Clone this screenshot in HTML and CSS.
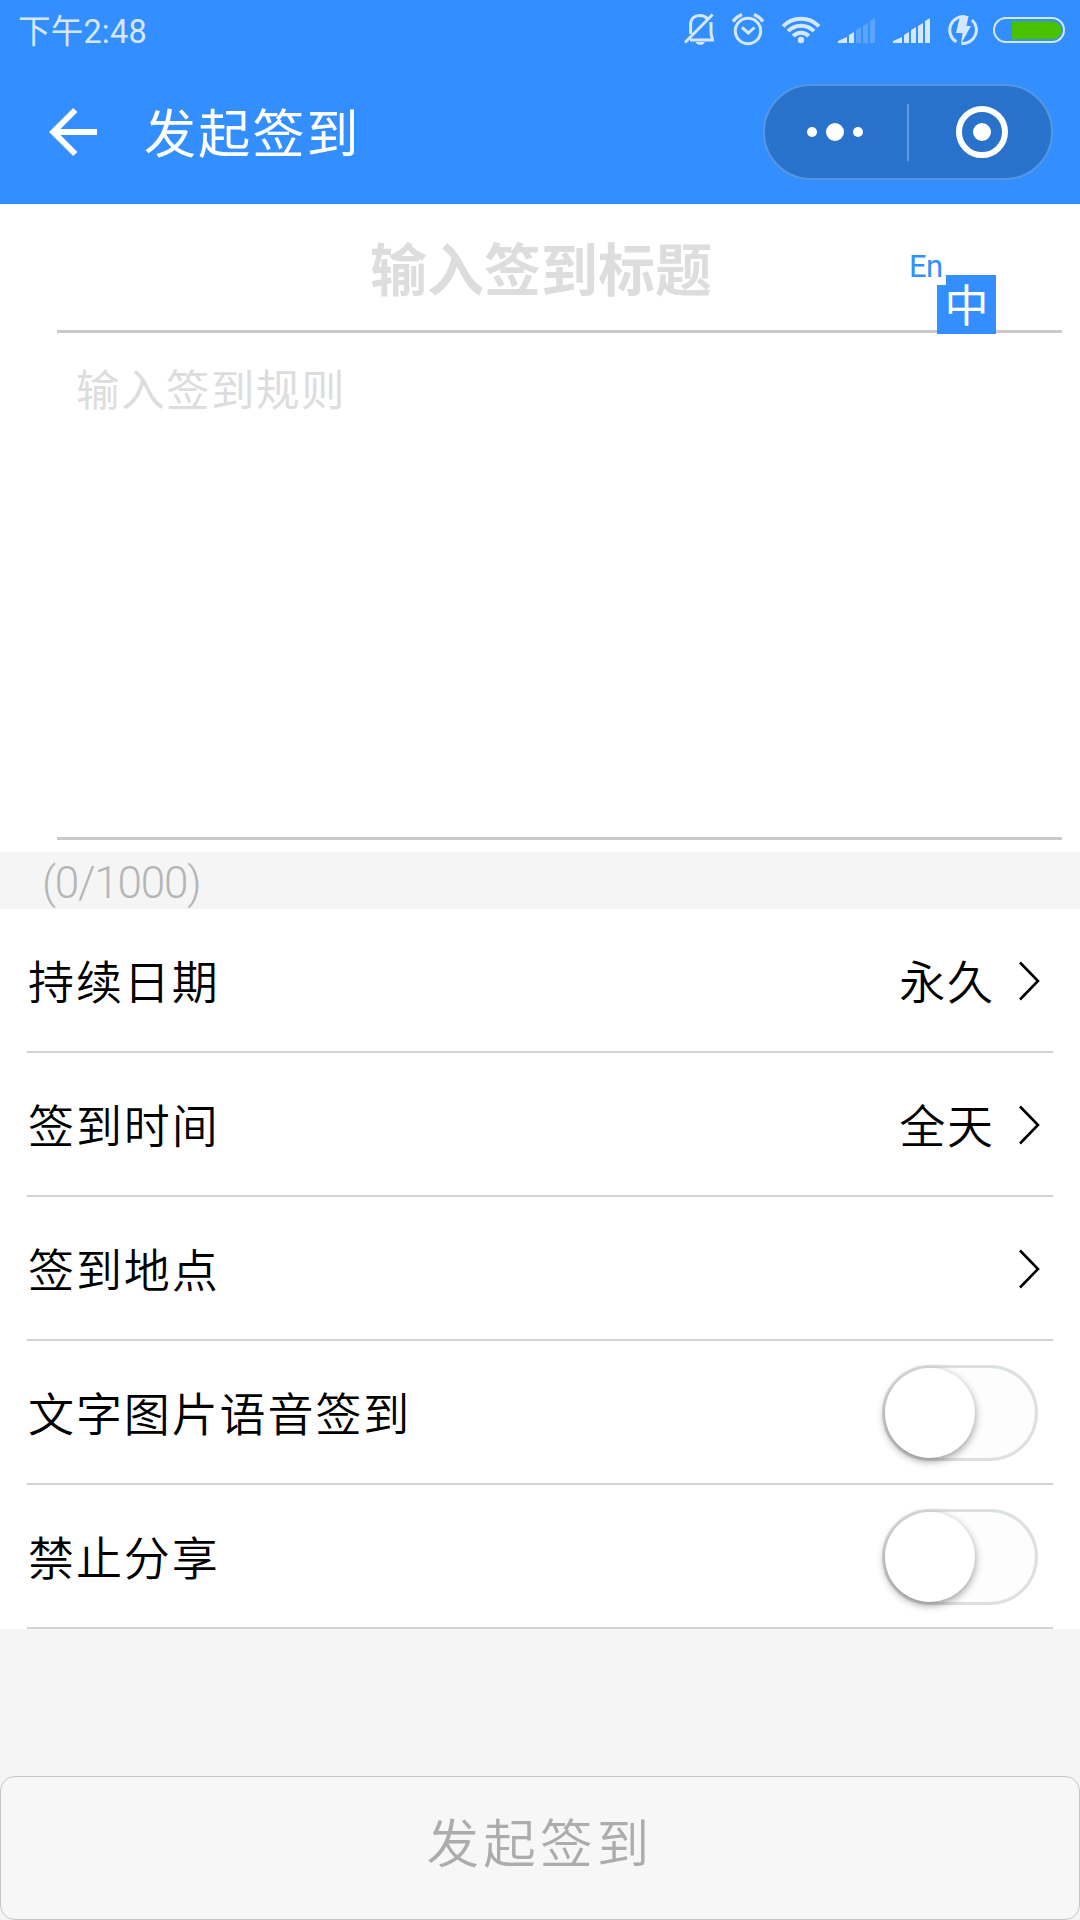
FILE: index.html
```html
<!DOCTYPE html>
<html lang="zh-CN">
<head>
<meta charset="utf-8">
<title>发起签到</title>
<link rel="stylesheet" href="styles.css">
</head>
<body>
<header class="header">
  <div class="status">
    <span class="time">下午2:48</span>
    <div class="status-icons">
      <svg class="bell" width="30" height="34" viewBox="684 13 30 34" fill="none" stroke="#d6e8ff" stroke-width="3"><path d="M690.6 34V25C690.6 18.5 694.5 15.5 699.7 15.5C703 15.5 705.500 16.500 707 18.500M711 22V32C711 36 712.300 37.500 712.600 40H690M685 42.500L712.600 14.500" /><path d="M695.500 42H705C703 46 697.500 46 695.500 42Z" fill="#d6e8ff" stroke="none"/></svg>
      <svg class="alarm" width="32" height="34" viewBox="732 13 32 34" fill="none" stroke="#d6e8ff" stroke-width="3"><circle cx="748" cy="31" r="12.700"/><path d="M742 27.500L748.300 33L754.500 27.500"/><path d="M733 21.500Q736 17 742 14.500M763 21.500Q760 17 754 14.500" stroke-width="3.400"/></svg>
      <svg class="wifi" width="40" height="34" viewBox="781 13 40 34" fill="none" stroke="#d6e8ff" stroke-width="4"><path d="M783 26.300A25 25 0 0 1 819 26.300M788 31.200A18 18 0 0 1 814 31.200M793.200 36A11 11 0 0 1 808.800 36"/><circle cx="801" cy="40" r="3.200" fill="#d6e8ff" stroke="none"/></svg>
      <svg class="signal" width="38" height="34" viewBox="0 0 38 34" fill="#d6e8ff"><path d="M0 30V28L9 24V30ZM11 30V22L16 19V30Z"/><path d="M18 30V17L23 14V30ZM25 30V13L30 10V30ZM32 30V8L37 5V30Z" fill="#5ba4ff"/></svg>
      <svg class="signal" width="38" height="34" viewBox="0 0 38 34" fill="#d6e8ff"><path d="M0 30V28L9 24V30ZM11 30V22L16 19V30ZM18 30V17L23 14V30ZM25 30V13L30 10V30ZM32 30V8L37 5V30Z"/></svg>
      <svg class="charge" width="30" height="34" viewBox="948 13 30 34"><path d="M966 16.900A13.500 13.500 0 0 0 956.500 41.800M972 20A13.500 13.500 0 0 1 961.500 43.400" fill="none" stroke="#d6e8ff" stroke-width="3"/><path d="M960 16H968.500L966.500 26H971L961 44L962.500 33H956Z" fill="#d6e8ff"/></svg>
      <svg class="battery" width="72" height="34" viewBox="993 13 72 34"><rect x="994" y="18" width="70" height="24" rx="12" fill="none" stroke="#d6e8ff" stroke-width="2"/><path d="M1012 21.300H1052.500A8.900 8.900 0 0 1 1052.500 39.300H1012Z" fill="#48c200"/></svg>
    </div>
  </div>
  <div class="navbar">
    <svg class="back" width="50" height="50" viewBox="48 107 50 50" fill="none" stroke="#fff" stroke-width="6"><path d="M97 132H53M75.300 110L53.300 132L75.300 154"/></svg>
    <h1 class="page-title">发起签到</h1>
    <div class="capsule">
      <svg class="more" width="58" height="20" viewBox="0 0 58 20" fill="#fff"><circle cx="6" cy="10" r="5"/><circle cx="29" cy="10" r="9"/><circle cx="52" cy="10" r="5"/></svg>
      <span class="divider"></span>
      <svg class="close" width="52" height="52" viewBox="0 0 52 52"><circle cx="26" cy="26" r="23" fill="none" stroke="#fff" stroke-width="6"/><circle cx="26" cy="26" r="9" fill="#fff"/></svg>
    </div>
  </div>
</header>
<main>
  <section class="editor">
    <div class="title-field">输入签到标题</div>
    <div class="rules-field">输入签到规则</div>
    <div class="translate">
      <span class="en">En</span>
      <span class="zh">中</span>
    </div>
  </section>
  <div class="counter">(0/1000)</div>
  <section class="options">
    <div class="row"><span class="label">持续日期</span><span class="value">永久</span><svg class="chevron" width="22" height="42" viewBox="0 0 22 42"><path d="M2 2.500L20 21L2 39.500"/></svg></div>
    <div class="row"><span class="label">签到时间</span><span class="value">全天</span><svg class="chevron" width="22" height="42" viewBox="0 0 22 42"><path d="M2 2.500L20 21L2 39.500"/></svg></div>
    <div class="row"><span class="label">签到地点</span><span class="value"></span><svg class="chevron" width="22" height="42" viewBox="0 0 22 42"><path d="M2 2.500L20 21L2 39.500"/></svg></div>
    <div class="row"><span class="label">文字图片语音签到</span><span class="switch"><span class="track"><span class="knob"></span></span></span></div>
    <div class="row"><span class="label">禁止分享</span><span class="switch"><span class="track"><span class="knob"></span></span></span></div>
  </section>
</main>
<button class="submit" type="button">发起签到</button>
</body>
</html>
```
FILE: styles.css
```css
* { box-sizing: border-box; }
body {
  margin: 0;
  width: 1080px;
  height: 1920px;
  display: flex;
  flex-direction: column;
  background: #f5f5f5;
  color: #000;
  font-family: "Noto Sans CJK SC", sans-serif;
  font-weight: 350;
  overflow: hidden;
}
svg { display: block; flex: none; }
.header { height: 204px; background: #338eff; }
.status {
  height: 60px;
  padding: 0 15px 0 18px;
  display: flex;
  align-items: center;
  justify-content: space-between;
  color: #d6e8ff;
}
.time {
  font-family: Roboto, "Noto Sans CJK SC", sans-serif;
  font-size: 32.500px;
  line-height: 60px;
  padding-top: 3px;
  letter-spacing: .2px;
  font-weight: 400;
}
.status-icons { display: flex; gap: 17px; }
.bell { margin-right: 1px; }
.charge { margin: 0 -2px 0 0; }
.navbar {
  height: 144px;
  padding: 0 27px 0 48px;
  display: flex;
  align-items: center;
}
.page-title {
  flex: 1;
  margin: 0 0 2px 46px;
  color: #fff;
  font-size: 52px;
  line-height: 72px;
  font-weight: 400;
  letter-spacing: 2.200px;
}
.capsule {
  width: 290px;
  height: 96px;
  display: flex;
  align-items: center;
  border: 2px solid #5795e2;
  border-radius: 48px;
  background: #2872cb;
}
.more { margin-left: 41px; }
.divider { width: 2px; height: 57px; margin-left: 43px; background: #6299dc; }
.close { margin-left: 47px; }
.editor {
  position: relative;
  height: 648px;
  padding: 0 18px 12px 57px;
  display: flex;
  flex-direction: column;
  background: #fff;
  color: #ddd;
}
.title-field {
  height: 129px;
  padding-right: 48px;
  padding-left: 11px;
  border-bottom: 3px solid #cacaca;
  font-size: 57px;
  font-weight: 700;
  line-height: 125px;
  text-align: center;
}
.rules-field {
  flex: 1;
  padding: 24px 19px;
  border-bottom: 3px solid #cacaca;
  font-size: 43.500px;
  font-weight: 400;
  line-height: 62px;
  letter-spacing: 1.500px;
}
.translate {
  position: absolute;
  left: 909px;
  top: 43px;
  width: 87px;
  height: 88px;
}
.en {
  position: absolute;
  left: 0;
  top: 0;
  width: 37px;
  height: 28px;
  font-family: Roboto, sans-serif;
  font-weight: 400;
  font-size: 31px;
  line-height: 40px;
  letter-spacing: -.5px;
  color: #338eff;
  z-index: 1;
}
.zh {
  position: absolute;
  right: 0;
  bottom: 1px;
  width: 59px;
  height: 59px;
  text-align: center;
  font-size: 44px;
  font-weight: 400;
  line-height: 57px;
  color: #fff;
  background: #338eff;
  clip-path: polygon(9px 0, 100% 0, 100% 100%, 0 100%, 0 10px, 9px 10px);
}
.counter {
  height: 57px;
  padding-left: 42px;
  font: 300 44px/63px Roboto, sans-serif;
  letter-spacing: -1.200px;
  color: #b5b5b5;
}
.options { background: #fff; padding: 0 27px; }
.row {
  height: 144px;
  display: flex;
  align-items: center;
  border-bottom: 2px solid #d3d3d3;
  font-size: 46px;
  line-height: 66px;
  letter-spacing: 1.900px;
}
.label { padding: 0 0 2px 1px; }
.value { margin-left: auto; margin-right: 23px; padding-bottom: 2px; }
.chevron { margin: 2px 13px 0 0; fill: none; stroke: #000; stroke-width: 2.600; }
.switch {
  width: 156px;
  height: 96px;
  margin: 2px 15px 0 auto;
  border: 3px solid #dfdfdf;
  border-radius: 48px;
  background: #4cd964;
  background-clip: padding-box;
}
.track {
  display: block;
  width: 150px;
  height: 90px;
  border-radius: 45px;
  background: #fdfdfd;
}
.knob {
  display: block;
  width: 90px;
  height: 90px;
  border-radius: 50%;
  background: #fff;
  box-shadow: 0 3px 9px rgba(0, 0, 0, .4);
}
.submit {
  margin-top: auto;
  height: 144px;
  padding: 0 6px 17px;
  border: 1.500px solid #c6c6c6;
  border-radius: 15px;
  background: #f7f7f7;
  color: #acacac;
  font: 350 52.500px/72px "Noto Sans CJK SC", sans-serif;
  letter-spacing: 4.300px;
}
```
